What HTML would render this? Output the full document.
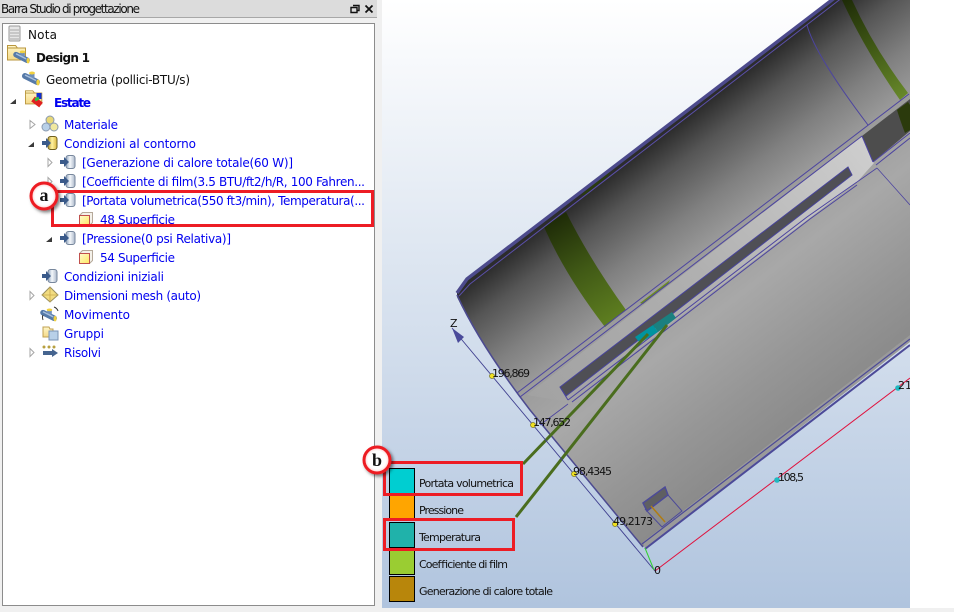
<!DOCTYPE html>
<html><head><meta charset="utf-8"><title>Barra Studio di progettazione</title>
<style>
html,body{margin:0;padding:0;width:954px;height:612px;overflow:hidden;background:#fff}
svg{display:block}
.t{font-family:"DejaVu Sans",sans-serif;font-size:12px;fill:#0000f0}
.k{fill:#111}
.b{font-weight:bold}
.l{font-family:"DejaVu Sans",sans-serif;font-size:11px;fill:#111}
</style></head><body>
<svg width="954" height="612" viewBox="0 0 954 612" xmlns="http://www.w3.org/2000/svg">
<defs>
<linearGradient id="sky" x1="0" y1="0" x2="0" y2="1"><stop offset="0" stop-color="#fff"/><stop offset="1" stop-color="#b0c4de"/></linearGradient>
<linearGradient id="body" gradientUnits="userSpaceOnUse" x1="457" y1="293" x2="648" y2="543">
<stop offset="0" stop-color="#2c2c2c"/><stop offset=".1" stop-color="#555"/><stop offset=".25" stop-color="#808080"/><stop offset=".38" stop-color="#9c9c9c"/><stop offset=".55" stop-color="#a8a8a8"/><stop offset=".8" stop-color="#969696"/><stop offset="1" stop-color="#8a8a8a"/>
</linearGradient>
<linearGradient id="strip" gradientUnits="userSpaceOnUse" x1="527" y1="395" x2="862" y2="137"><stop offset="0" stop-color="#a2a2a2"/><stop offset=".5" stop-color="#b0b0b0"/><stop offset="1" stop-color="#cecece"/></linearGradient>
<linearGradient id="band" gradientUnits="userSpaceOnUse" x1="555" y1="220" x2="615" y2="320"><stop offset="0" stop-color="#1f2c08"/><stop offset=".5" stop-color="#415a16"/><stop offset="1" stop-color="#5e7e20"/></linearGradient>
<linearGradient id="band2" gradientUnits="userSpaceOnUse" x1="846" y1="0" x2="904" y2="97"><stop offset="0" stop-color="#1f2c08"/><stop offset=".5" stop-color="#415a16"/><stop offset="1" stop-color="#67882a"/></linearGradient>
<radialGradient id="cir"><stop offset="0" stop-color="#fff"/><stop offset=".7" stop-color="#fff"/><stop offset="1" stop-color="#ffc4c4"/></radialGradient>
<filter id="sh" x="-40%" y="-40%" width="180%" height="180%"><feDropShadow dx="2" dy="2" stdDeviation="1.6" flood-color="#000" flood-opacity=".5"/></filter>
<linearGradient id="fold" x1="0" y1="0" x2="0" y2="1"><stop offset="0" stop-color="#fff6c8"/><stop offset="1" stop-color="#f5d987"/></linearGradient>
<linearGradient id="cube" x1="0" y1="0" x2="1" y2="1"><stop offset="0" stop-color="#fffbd0"/><stop offset="1" stop-color="#ffe860"/></linearGradient>
<linearGradient id="cg" x1="0" y1="0" x2="1" y2="0"><stop offset="0" stop-color="#8fa3bd"/><stop offset=".45" stop-color="#f4f7fb"/><stop offset="1" stop-color="#aab7c8"/></linearGradient>
<linearGradient id="cy" x1="0" y1="0" x2="1" y2="0"><stop offset="0" stop-color="#b89a30"/><stop offset=".45" stop-color="#fff2a0"/><stop offset="1" stop-color="#dcb840"/></linearGradient>
<symbol id="bcg" viewBox="0 0 16 14" overflow="visible">
<rect x="6" y="0.500" width="9" height="13" rx="2.500" fill="url(#cg)" stroke="#76869c"/>
<path d="M0 5h4V2l5 5-5 5V9H0z" fill="#3a5a8a"/>
</symbol>
<symbol id="bcy" viewBox="0 0 16 14" overflow="visible">
<rect x="6" y="0.500" width="9" height="13" rx="2.500" fill="url(#cy)" stroke="#6f5f20"/>
<path d="M0 5h4V2l5 5-5 5V9H0z" fill="#3a5a8a"/>
</symbol>
<symbol id="cb" viewBox="0 0 14 14" overflow="visible">
<path d="M.5 3.500L3.500.5h10v10l-3 3H.5z" fill="#f4f1ea" stroke="#b5a99a"/>
<rect x=".5" y="3.500" width="10" height="10" fill="url(#cube)" stroke="#c0504d"/>
</symbol>
<symbol id="pipe" viewBox="0 0 16 14" overflow="visible">
<path d="M1 5L13 11" stroke="#567aa8" stroke-width="6" stroke-linecap="round"/>
<path d="M8 7V2" stroke="#6f8fba" stroke-width="5"/>
<ellipse cx="8" cy="2" rx="3" ry="1.500" fill="#f0d040"/>
<ellipse cx="14" cy="11.500" rx="1.700" ry="3" fill="#f0d040"/>
<path d="M1 4L12 9.500" stroke="#a8c0de" stroke-width="1.500"/>
</symbol>
<symbol id="fd" viewBox="0 0 22 18" overflow="visible">
<path d="M.5 3V.5h8l2 2.500h8V15H.5z" fill="url(#fold)" stroke="#b8963e"/>
<path d="M.5 3H18.500" stroke="#b8963e"/>
</symbol>
</defs>

<rect width="954" height="612" fill="#fff"/>
<rect x="0" y="0" width="382" height="612" fill="#f0f0f0"/>
<rect x="0" y="608" width="954" height="4" fill="#f0f0f0"/>
<rect x="0" y="0" width="377" height="17" fill="#dcdcdc"/>
<rect x="0" y="17" width="377" height="1" fill="#a8a8a8"/>
<text class="t k" x="1" y="13" textLength="139">Barra Studio di progettazione</text>
<path d="M351 7.500h6v5h-6zM353 5.500h6v5h-2" fill="none" stroke="#111" stroke-width="1.400"/>
<path d="M365.500 5.500l7 7m0-7l-7 7" stroke="#111" stroke-width="1.800"/>
<rect x="2.500" y="23.500" width="372" height="582" fill="#fff" stroke="#8c8c8c"/>

<!-- viewport -->
<rect x="382" y="0" width="528" height="608" fill="url(#sky)"/>
<svg x="382" y="0" width="528" height="608" viewBox="382 0 528 608">
<path d="M457 293L467 279L841 -8L910 -8V340L643 547L530 410Q480 345 457 297Z" fill="url(#body)"/>
<path d="M527 395L862 136L874 163L857 182L568 402Z" fill="url(#strip)"/>
<path d="M862 136L910 99V131L873 162Z" fill="#4d4d4d"/>
<path d="M544 227L566 212Q590 260 626 310L605 327Q565 275 544 227Z" fill="url(#band)"/>
<path d="M842 0H852Q875 50 908 93L900 100Q865 50 842 0Z" fill="url(#band2)"/>
<path d="M897 110L908 102L910 105V130L905 133Q900 120 897 110Z" fill="#2b3a0c"/>
<path d="M581 195L612 168L608 176L585 195Z" fill="#2a3a10"/>
<path d="M640 303L670 280L668 284L643 304Z" fill="#6b8a22"/>
<!-- rim -->
<path d="M457 293L467 279L845 -10" fill="none" stroke="#4c4a8c" stroke-width="3.500"/>
<path d="M459 296L470 284L847 -6" fill="none" stroke="#5a4fa8" stroke-width="1"/>
<path d="M457 295Q480 345 530 410L643 547" fill="none" stroke="#4c4a90" stroke-width="1.500"/>
<!-- bottom band -->
<path d="M643 542L910 335V342L645 549Z" fill="#9a9a9a"/>
<path d="M642 544L910 339" fill="none" stroke="#4c4a98" stroke-width="1.200"/>
<path d="M645 549L910 345" fill="none" stroke="#4c4a98" stroke-width="2"/>
<!-- lines -->
<g fill="none" stroke="#4c44a0" stroke-width="1">
<path d="M517 393L909 94"/><path d="M520 397L862 136"/>
<path d="M862 136L873 162"/><path d="M873 162L910 133"/><path d="M876 165L910 138"/>
<path d="M568 400L807 217L857 182"/><path d="M572 402L810 219L857 185"/>
<path d="M560 387L568 400"/>
<path d="M857 182L877 168M877 168L910 205" stroke-width=".8"/>
<path d="M807 25Q815 55 868 125"/>
<path d="M540 425L568 404" stroke-width=".8"/>
</g>
<path d="M560 387L848 167L852 175L566 396Z" fill="#4f4f55" stroke="#48449a" stroke-width="1"/>
<path d="M635 337L653 325L658 332L640 343Z" fill="#0094a0"/>
<path d="M653 325L672 312L676 318L658 332Z" fill="#1a8080"/>
<path d="M643 503L665 487L668 495L647 511Z" fill="#5f5f62" stroke="#4c4a98" stroke-width="1.500"/>
<path d="M645 509L662 527L682 511L668 495" fill="none" stroke="#4c4a98" stroke-width="1"/>
<path d="M651 506L665 522" stroke="#b07c12" stroke-width="1.500"/>
<path d="M523 464L648 334" stroke="#4a6d1e" stroke-width="3"/>
<path d="M516 517L667 325" stroke="#4a6d1e" stroke-width="3"/>
<!-- axes -->
<path d="M452 328L655 571" stroke="#3f3f8f" stroke-width=".9" fill="none"/>
<path d="M452 328L464 337L458 343Z" fill="#4a4a9a"/>
<path d="M645 548L654 570" stroke="#30d030" stroke-width="1"/>
<path d="M655 571L910 378" stroke="#e0103c" stroke-width="1"/>
<g fill="#f0e020" stroke="#7d7a20" stroke-width=".7">
<circle cx="492" cy="376" r="2.500"/><circle cx="533" cy="425" r="2.500"/><circle cx="574" cy="474" r="2.500"/><circle cx="615" cy="524" r="2.500"/>
</g>
<g fill="#20b8c0"><circle cx="777" cy="480" r="2.800"/><circle cx="898" cy="388" r="2.800"/></g>
<text class="l" x="450" y="327">Z</text>
<text class="l" x="492" y="377" textLength="38">196,869</text>
<text class="l" x="533" y="426" textLength="38">147,652</text>
<text class="l" x="573" y="475" textLength="39">98,4345</text>
<text class="l" x="613" y="525" textLength="40">49,2173</text>
<text class="l" x="778" y="481" textLength="26">108,5</text>
<text class="l" x="898" y="389">21</text>
<text class="l" x="654" y="574">0</text>
</svg>

<!-- legend -->
<g stroke="#000" stroke-width="1">
<rect x="389.500" y="468.500" width="25" height="25" fill="#00ced1"/>
<rect x="389.500" y="495.500" width="25" height="25" fill="#ffa500"/>
<rect x="389.500" y="522.500" width="25" height="25" fill="#20b2aa"/>
<rect x="389.500" y="549.500" width="25" height="25" fill="#9acd32"/>
<rect x="389.500" y="576.500" width="25" height="25" fill="#b8860b"/>
</g>
<text class="l" x="419" y="487" textLength="95">Portata volumetrica</text>
<text class="l" x="419" y="514" textLength="45">Pressione</text>
<text class="l" x="419" y="541" textLength="62">Temperatura</text>
<text class="l" x="419" y="568" textLength="89">Coefficiente di film</text>
<text class="l" x="419" y="595" textLength="134">Generazione di calore totale</text>

<!-- tree text -->
<text class="t k" x="28" y="39" textLength="29">Nota</text>
<text class="t k b" x="36" y="62" textLength="54">Design 1</text>
<text class="t k" x="46" y="84" textLength="144">Geometria (pollici-BTU/s)</text>
<text class="t b" x="54" y="107" textLength="37">Estate</text>
<text class="t" x="64" y="129" textLength="54">Materiale</text>
<text class="t" x="64" y="148" textLength="132">Condizioni al contorno</text>
<text class="t" x="82" y="167" textLength="211">[Generazione di calore totale(60 W)]</text>
<text class="t" x="82" y="186" textLength="283">[Coefficiente di film(3.5 BTU/ft2/h/R, 100 Fahren...</text>
<text class="t" x="82" y="205" textLength="283">[Portata volumetrica(550 ft3/min), Temperatura(...</text>
<text class="t" x="100" y="224" textLength="75">48 Superficie</text>
<text class="t" x="82" y="243" textLength="149">[Pressione(0 psi Relativa)]</text>
<text class="t" x="100" y="262" textLength="75">54 Superficie</text>
<text class="t" x="64" y="281" textLength="100">Condizioni iniziali</text>
<text class="t" x="64" y="300" textLength="137">Dimensioni mesh (auto)</text>
<text class="t" x="64" y="319" textLength="66">Movimento</text>
<text class="t" x="64" y="338" textLength="40">Gruppi</text>
<text class="t" x="64" y="357" textLength="37">Risolvi</text>

<!-- expanders -->
<g fill="#fff" stroke="#a6a6a6">
<path d="M30 120.500l5 4-5 4zM48 158.500l4 4-4 4zM48 177.500l4 4-4 4zM30 291.500l4 4-4 4zM30 348.500l4 4-4 4z"/>
</g>
<g fill="#3a3a3a">
<path d="M10 104l6-5v5zM28 147l6-5v5zM46 242l6-5v5z"/>
</g>

<!-- tree icons -->
<rect x="9" y="26" width="11" height="15" rx="1" fill="#e6e6e6" stroke="#9a9a9a"/>
<path d="M10 30h9M10 33h9M10 36h9M10 39h9" stroke="#a8a8a8"/>
<use href="#fd" x="7" y="45" width="22" height="18"/>
<use href="#pipe" x="15" y="50" width="15" height="13"/>
<use href="#pipe" x="24" y="71" width="16" height="14"/>
<use href="#fd" x="25" y="90" width="20" height="17"/>
<path d="M33 99l8 6" stroke="#e02020" stroke-width="6"/>
<path d="M39 93v6" stroke="#1030d0" stroke-width="5"/>
<path d="M35 100l4-2" stroke="#30c040" stroke-width="3"/>
<circle cx="50" cy="120" r="4" fill="#e8d878" stroke="#8a9ab0"/>
<circle cx="46" cy="127" r="4" fill="#b8d0e8" stroke="#8a9ab0"/>
<circle cx="54" cy="127" r="4" fill="#f0e8a0" stroke="#8a9ab0"/>
<use href="#bcy" x="42" y="136" width="16" height="14"/>
<use href="#bcg" x="60" y="155" width="16" height="14"/>
<use href="#bcg" x="60" y="174" width="16" height="14"/>
<use href="#bcg" x="60" y="193" width="16" height="14"/>
<use href="#cb" x="79" y="212" width="14" height="14"/>
<use href="#bcg" x="60" y="231" width="16" height="14"/>
<use href="#cb" x="79" y="250" width="14" height="14"/>
<use href="#bcg" x="42" y="269" width="16" height="14"/>
<path d="M50 287l8 8-8 7-8-7z" fill="#f2dc80" stroke="#9a9060"/>
<path d="M42 295h16M50 287v15" stroke="#c9a94a" stroke-width=".8"/>
<use href="#pipe" x="42" y="308" width="15" height="13"/>
<path d="M54 307q3 1 4 4M43 320q-1-3 0-5" fill="none" stroke="#333" stroke-width="1"/>
<path d="M43 337v-10h6l1 2h3v8z" fill="url(#fold)" stroke="#c0a050"/>
<rect x="49" y="331" width="9" height="9" fill="#b8d0e8" stroke="#7a93b5"/>
<circle cx="44" cy="347" r="1.500" fill="#b8a040"/><circle cx="49" cy="347" r="1.500" fill="#b8a040"/><circle cx="54" cy="347" r="1.500" fill="#b8a040"/>
<path d="M43 351h9v-2l6 4-6 4v-2h-9z" fill="#45648f"/>

<!-- red callouts -->
<g fill="none" stroke="#ed1c24" stroke-width="3">
<rect x="52.500" y="191.500" width="320" height="34"/>
<rect x="384.500" y="462.500" width="137" height="32"/>
<rect x="384.500" y="519.500" width="129" height="30"/>
</g>
<g filter="url(#sh)"><circle cx="44" cy="196" r="13" fill="url(#cir)" stroke="#ed1c24" stroke-width="3"/></g>
<text x="44" y="201" text-anchor="middle" font-family="'Liberation Serif',serif" font-weight="bold" font-size="18" fill="#111">a</text>
<g filter="url(#sh)"><circle cx="377" cy="460" r="13" fill="url(#cir)" stroke="#ed1c24" stroke-width="3"/></g>
<text x="377" y="466" text-anchor="middle" font-family="'Liberation Serif',serif" font-weight="bold" font-size="18" fill="#111">b</text>
</svg>
</body></html>
